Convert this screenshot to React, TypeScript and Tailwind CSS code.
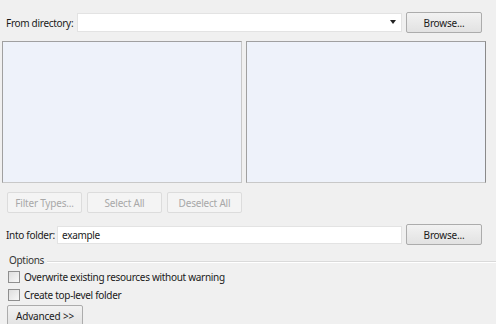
const font = { fontFamily: '"Noto Sans", "Open Sans", sans-serif' };

function Button({ label, disabled, className = "" }: { label: string; disabled?: boolean; className?: string }) {
  return (
    <button
      type="button"
      className={`flex h-[21px] shrink-0 items-center justify-center whitespace-nowrap rounded-[2px] border text-[10px] tracking-[-0.2px] ${
        disabled
          ? "border-[#dcdcdc] bg-[#f4f4f4] text-[#a8a8a8]"
          : "border-[#acacac] bg-gradient-to-b from-[#f2f2f2] to-[#e2e2e2] text-[#1a1a1a]"
      } ${className}`}
    >
      {label}
    </button>
  );
}

function Checkbox({ label }: { label: string }) {
  return (
    <label className="flex h-[18px] items-center gap-[4px] whitespace-nowrap text-[10px] tracking-[-0.3px] text-[#1a1a1a]">
      <span className="h-[12px] w-[12px] shrink-0 border border-[#8f8f8f] bg-gradient-to-br from-[#dedede] to-[#f8f8f8]" />
      {label}
    </label>
  );
}

export default function App() {
  return (
    <div
      className="h-[324px] w-[496px] overflow-hidden bg-[#f0f0f0] text-[10px] leading-none tracking-[-0.3px] text-[#1a1a1a]"
      style={font}
    >
      {/* source directory */}
      <div className="mt-[12px] flex h-[21px] items-center pl-[6px] pr-[14px]">
        <span className="w-[71px] shrink-0 whitespace-nowrap">From directory:</span>
        <div className="flex h-[19px] flex-1 items-center justify-end border border-[#e3e3e3] bg-white pr-[2px]">
          <svg width="8" height="5" viewBox="0 0 8 5" className="mr-[2px]">
            <path d="M1 0h6L4 4z" fill="#222" />
          </svg>
        </div>
        <Button label="Browse..." className="ml-[4px] w-[76px]" />
      </div>

      {/* file lists */}
      <div className="mt-[8px] flex gap-[4px] pl-[2px] pr-[10px]">
        <div className="h-[142px] flex-1 border border-[#a0a0a0] border-b-[#c8c8c8] border-r-[#c8c8c8] bg-[#eef2fa]" />
        <div className="h-[142px] flex-1 border border-[#a0a0a0] border-b-[#c8c8c8] border-r-[#8a8a8a] bg-[#eef2fa]" />
      </div>

      <div className="mt-[9px] flex gap-[5px] pl-[7px]">
        <Button label="Filter Types..." disabled className="w-[75px]" />
        <Button label="Select All" disabled className="w-[75px]" />
        <Button label="Deselect All" disabled className="w-[75px]" />
      </div>

      {/* target folder */}
      <div className="mt-[11px] flex h-[21px] items-center pl-[6px] pr-[14px]">
        <span className="w-[51px] shrink-0 whitespace-nowrap">Into folder:</span>
        <div className="flex h-[18px] flex-1 items-center border border-[#e3e3e3] bg-white pl-[4px]">example</div>
        <Button label="Browse..." className="ml-[4px] w-[76px]" />
      </div>

      {/* options */}
      <div className="mt-[10px] flex items-center pl-[9px]">
        <span className="text-[#333]">Options</span>
        <div className="ml-[3px] mt-[3px] flex-1 border-t border-b border-t-[#dadada] border-b-white" />
      </div>
      <div className="mt-[3px] flex flex-col pl-[8px]">
        <Checkbox label="Overwrite existing resources without warning" />
        <Checkbox label="Create top-level folder" />
      </div>
      <Button label="Advanced >>" className="ml-[7px] mt-[1px] h-[22px] w-[76px]" />
    </div>
  );
}
